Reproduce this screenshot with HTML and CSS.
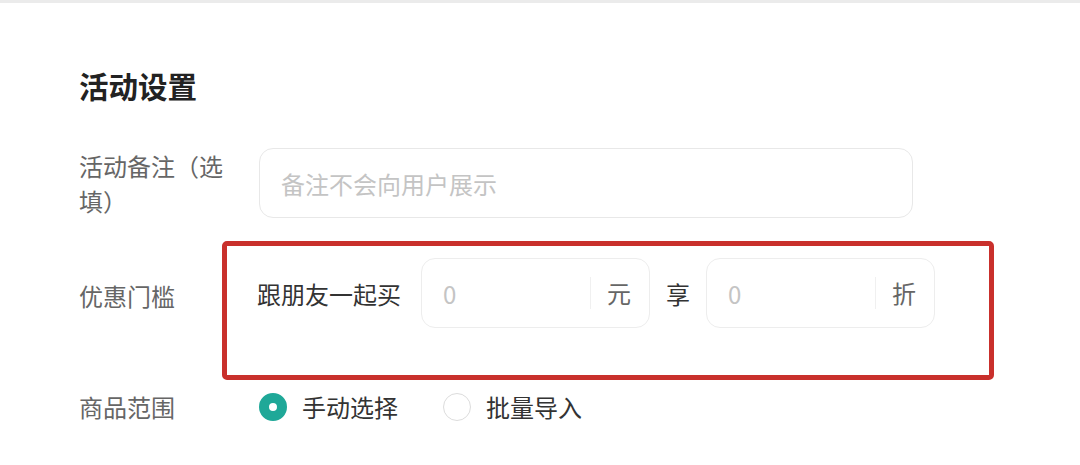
FILE: index.html
```html
<!DOCTYPE html>
<html lang="zh-CN">
<head>
    <meta charset="UTF-8">
    <meta name="viewport" content="width=device-width, initial-scale=1.0">
    <title>活动设置</title>
    <link rel="stylesheet" href="styles.css">
</head>
<body>

<div class="page">
    <h2 class="title">活动设置</h2>

    <div class="row">
        <div class="label label-wide">活动备注（选填）</div>
        <input type="text" class="remark" placeholder="备注不会向用户展示">
    </div>

    <div class="row">
        <div class="label label-narrow">优惠门槛</div>
        <div class="highlight">
            <span class="field-text">跟朋友一起买</span>
            <div class="unit-input">
                <input type="text" placeholder="0">
                <span class="unit">元</span>
            </div>
            <span class="field-text join">享</span>
            <div class="unit-input">
                <input type="text" placeholder="0">
                <span class="unit">折</span>
            </div>
        </div>
    </div>

    <div class="row row-radio">
        <div class="label label-wide">商品范围</div>
        <label class="radio checked"><span class="dot"></span>手动选择</label>
        <label class="radio"><span class="dot"></span>批量导入</label>
    </div>
</div>

</body>
</html>
```

FILE: styles.css
```css
body {
    font-family: "Noto Sans CJK SC", "Noto Sans", sans-serif;
    margin: 0;
    background: #fff;
    color: #333;
}
.page {
    border-top: 3px solid #ebebeb;
    padding-left: 79px;
}
.title {
    margin: 62px 0 0;
    font-size: 29.5px;
    line-height: 40px;
    font-weight: bold;
    color: #222;
}
.row {
    display: flex;
    align-items: flex-start;
    margin-top: 43px;
}
.label {
    font-size: 24px;
    line-height: 35px;
    color: #666;
    flex-shrink: 0;
}
.label-wide {
    width: 148px;
    margin-right: 32px;
}
.label-narrow {
    width: 143px;
    padding-top: 37px;
}
input {
    font-family: inherit;
    font-size: 24px;
    color: #333;
    outline: none;
    background: transparent;
}
input::placeholder {
    color: #c4c4c4;
}
.remark {
    box-sizing: border-box;
    width: 654px;
    height: 70px;
    border: 1.5px solid #e8e8e8;
    border-radius: 14px;
    padding: 0 21px;
}
.row + .row {
    margin-top: 23px;
}
.highlight {
    box-sizing: border-box;
    width: 772px;
    height: 139px;
    border: 5px solid #c9302c;
    border-radius: 5px;
    padding: 12px 0 0 30px;
    display: flex;
    align-items: center;
    align-content: flex-start;
    flex-wrap: wrap;
}
.field-text {
    font-size: 24px;
    color: #333;
    margin-right: 20px;
}
.join {
    margin: 0 16px;
}
.unit-input {
    box-sizing: border-box;
    width: 229px;
    height: 70px;
    border: 1.5px solid #ededed;
    border-radius: 14px;
    display: flex;
    align-items: center;
}
.unit-input input {
    border: none;
    width: 100%;
    min-width: 0;
    padding: 0 0 0 21px;
    height: 100%;
}
.unit {
    flex-shrink: 0;
    font-size: 24px;
    color: #666;
    border-left: 1.5px solid #f0f0f0;
    height: 32px;
    line-height: 32px;
    padding: 0 18px 0 16px;
}
.row-radio {
    align-items: center;
}
.row + .row-radio {
    margin-top: 9px;
}
.radio {
    display: flex;
    align-items: center;
    font-size: 24px;
    line-height: 35px;
    color: #333;
    margin-right: 45px;
}
.dot {
    box-sizing: border-box;
    width: 28px;
    height: 28px;
    border-radius: 50%;
    border: 1.5px solid #dcdcdc;
    margin-right: 15px;
}
.radio.checked .dot {
    border: 10px solid #1fa898;
}
```
